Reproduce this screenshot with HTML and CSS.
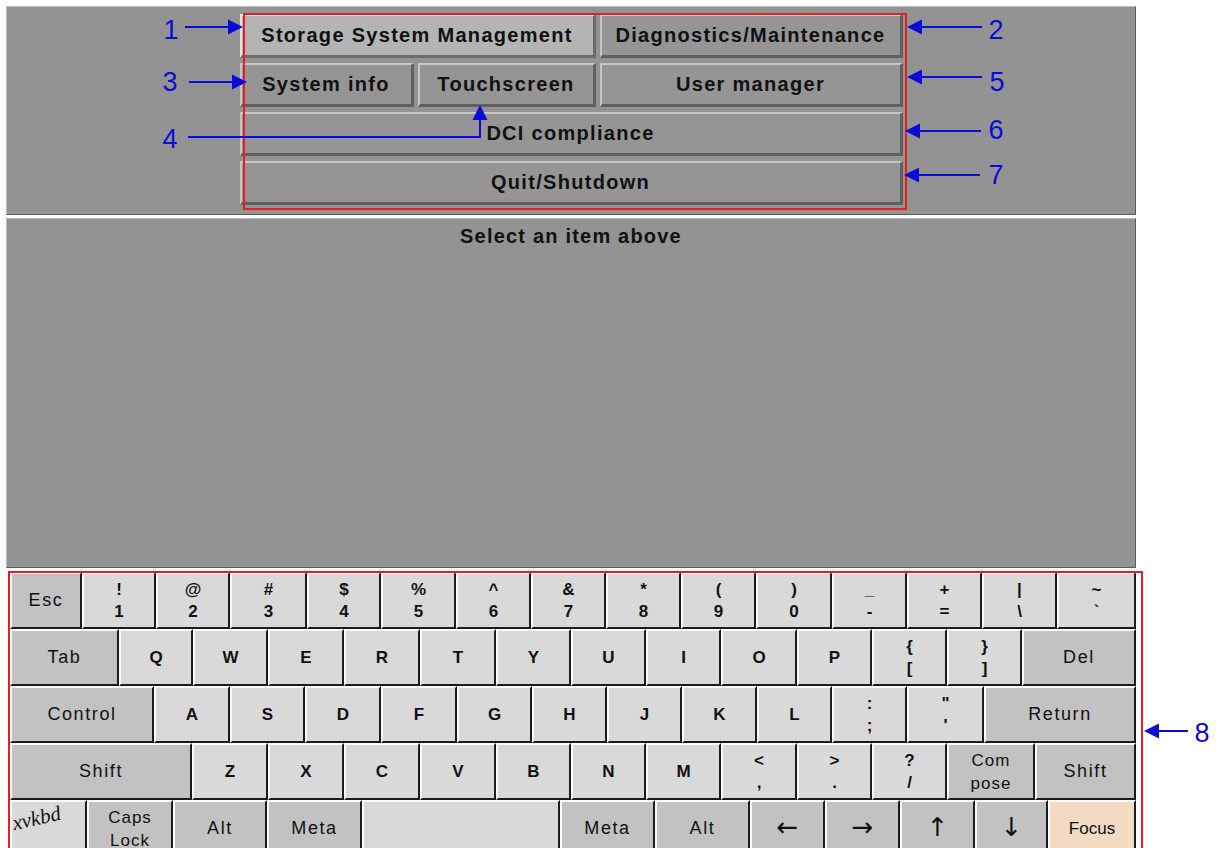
FILE: index.html
```html
<!DOCTYPE html>
<html>
<head>
<meta charset="utf-8">
<title>Menu</title>
<link rel="stylesheet" href="styles.css">
</head>
<body>
<div class="screen">
  <div class="panel top-panel">
    <div class="menu">
      <div class="btn span2 selected">Storage System Management</div>
      <div class="btn">Diagnostics/Maintenance</div>
      <div class="btn">System info</div>
      <div class="btn">Touchscreen</div>
      <div class="btn">User manager</div>
      <div class="btn span3">DCI compliance</div>
      <div class="btn span3">Quit/Shutdown</div>
    </div>
  </div>
  <div class="panel msg-panel">
    <div class="msg">Select an item above</div>
  </div>
  <div class="keyboard">
    <div class="row">
      <div class="key mod w72">Esc</div>
      <div class="key sym w74"><span>!</span><span>1</span></div>
      <div class="key sym w74"><span>@</span><span>2</span></div>
      <div class="key sym w77"><span>#</span><span>3</span></div>
      <div class="key sym w74"><span>$</span><span>4</span></div>
      <div class="key sym w75"><span>%</span><span>5</span></div>
      <div class="key sym w75"><span>^</span><span>6</span></div>
      <div class="key sym w75"><span>&amp;</span><span>7</span></div>
      <div class="key sym w75"><span>*</span><span>8</span></div>
      <div class="key sym w75"><span>(</span><span>9</span></div>
      <div class="key sym w76"><span>)</span><span>0</span></div>
      <div class="key sym w75"><span>_</span><span>-</span></div>
      <div class="key sym w75"><span>+</span><span>=</span></div>
      <div class="key sym w75"><span>|</span><span>\</span></div>
      <div class="key sym w79"><span>~</span><span>`</span></div>
    </div>
    <div class="row">
      <div class="key mod w109">Tab</div>
      <div class="key let w74">Q</div>
      <div class="key let w75">W</div>
      <div class="key let w76">E</div>
      <div class="key let w76">R</div>
      <div class="key let w76">T</div>
      <div class="key let w75">Y</div>
      <div class="key let w75">U</div>
      <div class="key let w75">I</div>
      <div class="key let w76">O</div>
      <div class="key let w75">P</div>
      <div class="key sym w75"><span>{</span><span>[</span></div>
      <div class="key sym w75"><span>}</span><span>]</span></div>
      <div class="key mod w114">Del</div>
    </div>
    <div class="row">
      <div class="key mod w144">Control</div>
      <div class="key let w76">A</div>
      <div class="key let w75">S</div>
      <div class="key let w76">D</div>
      <div class="key let w76">F</div>
      <div class="key let w75">G</div>
      <div class="key let w75">H</div>
      <div class="key let w75">J</div>
      <div class="key let w75">K</div>
      <div class="key let w75">L</div>
      <div class="key sym w75"><span>:</span><span>;</span></div>
      <div class="key sym w77"><span>"</span><span>'</span></div>
      <div class="key mod w152">Return</div>
    </div>
    <div class="row">
      <div class="key mod w182">Shift</div>
      <div class="key let w76">Z</div>
      <div class="key let w76">X</div>
      <div class="key let w76">C</div>
      <div class="key let w76">V</div>
      <div class="key let w75">B</div>
      <div class="key let w75">N</div>
      <div class="key let w75">M</div>
      <div class="key sym w76"><span>&lt;</span><span>,</span></div>
      <div class="key sym w75"><span>&gt;</span><span>.</span></div>
      <div class="key sym w75"><span>?</span><span>/</span></div>
      <div class="key mod two w88"><span>Com</span><span>pose</span></div>
      <div class="key mod w101">Shift</div>
    </div>
    <div class="row">
      <div class="key logo-key w77"><span class="logo">xvkbd</span></div>
      <div class="key mod two w86"><span>Caps</span><span>Lock</span></div>
      <div class="key mod w94">Alt</div>
      <div class="key mod w95">Meta</div>
      <div class="key space w198"></div>
      <div class="key mod w95">Meta</div>
      <div class="key mod w95">Alt</div>
      <div class="key mod arrow w75">←</div>
      <div class="key mod arrow w75">→</div>
      <div class="key mod arrow w75">↑</div>
      <div class="key mod arrow w73">↓</div>
      <div class="key focus w88">Focus</div>
    </div>
  </div>
</div>

<div class="redbox box-menu"></div>
<div class="redbox box-kbd"></div>

<svg class="arrows" width="1223" height="848" viewBox="0 0 1223 848">
  <g stroke="#0b0bd6" stroke-width="2" fill="none">
    <line x1="185" y1="27" x2="230" y2="27"/>
    <line x1="189" y1="82" x2="233" y2="82"/>
    <polyline points="188,137 480,137 480,118"/>
    <line x1="920" y1="27" x2="982" y2="27"/>
    <line x1="920" y1="77" x2="982" y2="77"/>
    <line x1="918" y1="131" x2="981" y2="131"/>
    <line x1="917" y1="175" x2="980" y2="175"/>
    <line x1="1157" y1="731" x2="1188" y2="731"/>
  </g>
  <g fill="#0b0bd6">
    <polygon points="243,27 228,19.5 228,34.5"/>
    <polygon points="247,82 232,74.5 232,89.5"/>
    <polygon points="480,105 472.5,120 487.5,120"/>
    <polygon points="907,27 922,19.5 922,34.5"/>
    <polygon points="907,77 922,69.5 922,84.5"/>
    <polygon points="905,131 920,123.5 920,138.5"/>
    <polygon points="904,175 919,167.5 919,182.5"/>
    <polygon points="1144,731 1159,723.5 1159,738.5"/>
  </g>
</svg>

<span class="num n1">1</span>
<span class="num n2">2</span>
<span class="num n3">3</span>
<span class="num n4">4</span>
<span class="num n5">5</span>
<span class="num n6">6</span>
<span class="num n7">7</span>
<span class="num n8">8</span>
</body>
</html>
```

FILE: styles.css
```css
html, body {
  margin: 0;
  padding: 0;
  background: #ffffff;
  overflow: hidden;
}

body {
  width: 1223px;
  height: 848px;
  position: relative;
  font-family: "Liberation Sans", Arial, sans-serif;
  color: #111111;
}

.screen {
  padding: 6px 0 0 6px;
  width: 1130px;
}

.panel {
  box-sizing: border-box;
  width: 1130px;
  background: #939393;
  border: 1px solid;
  border-color: #bcbcbc #5c5c5c #5c5c5c #bcbcbc;
}

.top-panel {
  height: 209px;
  display: flex;
  justify-content: center;
  padding-top: 7px;
}

.menu {
  display: grid;
  grid-template-columns: 174px 178px 303px;
  grid-auto-rows: 44px;
  column-gap: 4px;
  row-gap: 5px;
}

.btn {
  box-sizing: border-box;
  display: flex;
  align-items: center;
  justify-content: center;
  background: #959595;
  border-style: solid;
  border-width: 2px 3px 3px 2px;
  border-color: #c6c6c6 #606060 #606060 #c6c6c6;
  font-weight: bold;
  font-size: 20px;
  letter-spacing: 1.3px;
  color: #111111;
  white-space: nowrap;
}

.btn.selected {
  background: #b4b4b4;
  border-color: #e4e4e4 #6c6c6c #6c6c6c #e4e4e4;
}

.span2 { grid-column: span 2; }
.span3 { grid-column: span 3; }

.msg-panel {
  margin-top: 3px;
  height: 350px;
  padding-top: 6px;
}

.msg {
  text-align: center;
  font-weight: bold;
  font-size: 20px;
  letter-spacing: 1.2px;
  line-height: 22px;
}

.keyboard {
  margin: 4px 0 0 4px;
  width: 1126px;
  background: #ffffff;
}

.row {
  display: flex;
  height: 57px;
}

.key {
  box-sizing: border-box;
  height: 57px;
  display: flex;
  flex-direction: column;
  align-items: center;
  justify-content: center;
  background: #d9d9d9;
  border-style: solid;
  border-width: 2px;
  border-color: #fbfbfb #1c1c1c #1c1c1c #fbfbfb;
  color: #111111;
  white-space: nowrap;
}

.let {
  font-weight: bold;
  font-size: 17px;
}

.sym {
  font-weight: bold;
  font-size: 17px;
  line-height: 22px;
}

.mod {
  background: #c2c2c2;
  font-size: 18px;
  letter-spacing: 1.6px;
  line-height: 23px;
}

.two {
  font-size: 17px;
  letter-spacing: 1px;
  line-height: 23px;
}

.arrow {
  font-family: "DejaVu Sans", sans-serif;
  font-size: 26px;
  letter-spacing: 0;
  line-height: 26px;
  padding-bottom: 4px;
}

.space {
  background: #d9d9d9;
}

.focus {
  background: #f2dbc2;
  font-size: 17px;
}

.logo-key {
  justify-content: flex-start;
  align-items: flex-start;
}

.logo {
  display: block;
  font-family: "Liberation Serif", serif;
  font-style: italic;
  font-size: 21px;
  line-height: 22px;
  letter-spacing: 0;
  margin: 5px 0 0 0;
  transform: rotate(-13deg);
  transform-origin: center center;
}

.w72 { flex: 0 0 72px; }
.w73 { flex: 0 0 73px; }
.w74 { flex: 0 0 74px; }
.w75 { flex: 0 0 75px; }
.w76 { flex: 0 0 76px; }
.w77 { flex: 0 0 77px; }
.w79 { flex: 0 0 79px; }
.w86 { flex: 0 0 86px; }
.w88 { flex: 0 0 88px; }
.w94 { flex: 0 0 94px; }
.w95 { flex: 0 0 95px; }
.w101 { flex: 0 0 101px; }
.w109 { flex: 0 0 109px; }
.w114 { flex: 0 0 114px; }
.w144 { flex: 0 0 144px; }
.w152 { flex: 0 0 152px; }
.w182 { flex: 0 0 182px; }
.w198 { flex: 0 0 198px; }

.redbox {
  position: absolute;
  box-sizing: border-box;
  border: 2px solid #e41e26;
}

.box-menu {
  left: 243px;
  top: 13px;
  width: 664px;
  height: 197px;
}

.box-kbd {
  left: 8px;
  top: 571px;
  width: 1135px;
  height: 300px;
}

.arrows {
  position: absolute;
  left: 0;
  top: 0;
}

.num {
  position: absolute;
  width: 30px;
  text-align: center;
  font-size: 27px;
  line-height: 28px;
  color: #0b0bd6;
}

.n1 { left: 156px; top: 16px; }
.n3 { left: 155px; top: 68px; }
.n4 { left: 155px; top: 125px; }
.n2 { left: 981px; top: 16px; }
.n5 { left: 982px; top: 68px; }
.n6 { left: 981px; top: 116px; }
.n7 { left: 981px; top: 161px; }
.n8 { left: 1187px; top: 719px; }
```
